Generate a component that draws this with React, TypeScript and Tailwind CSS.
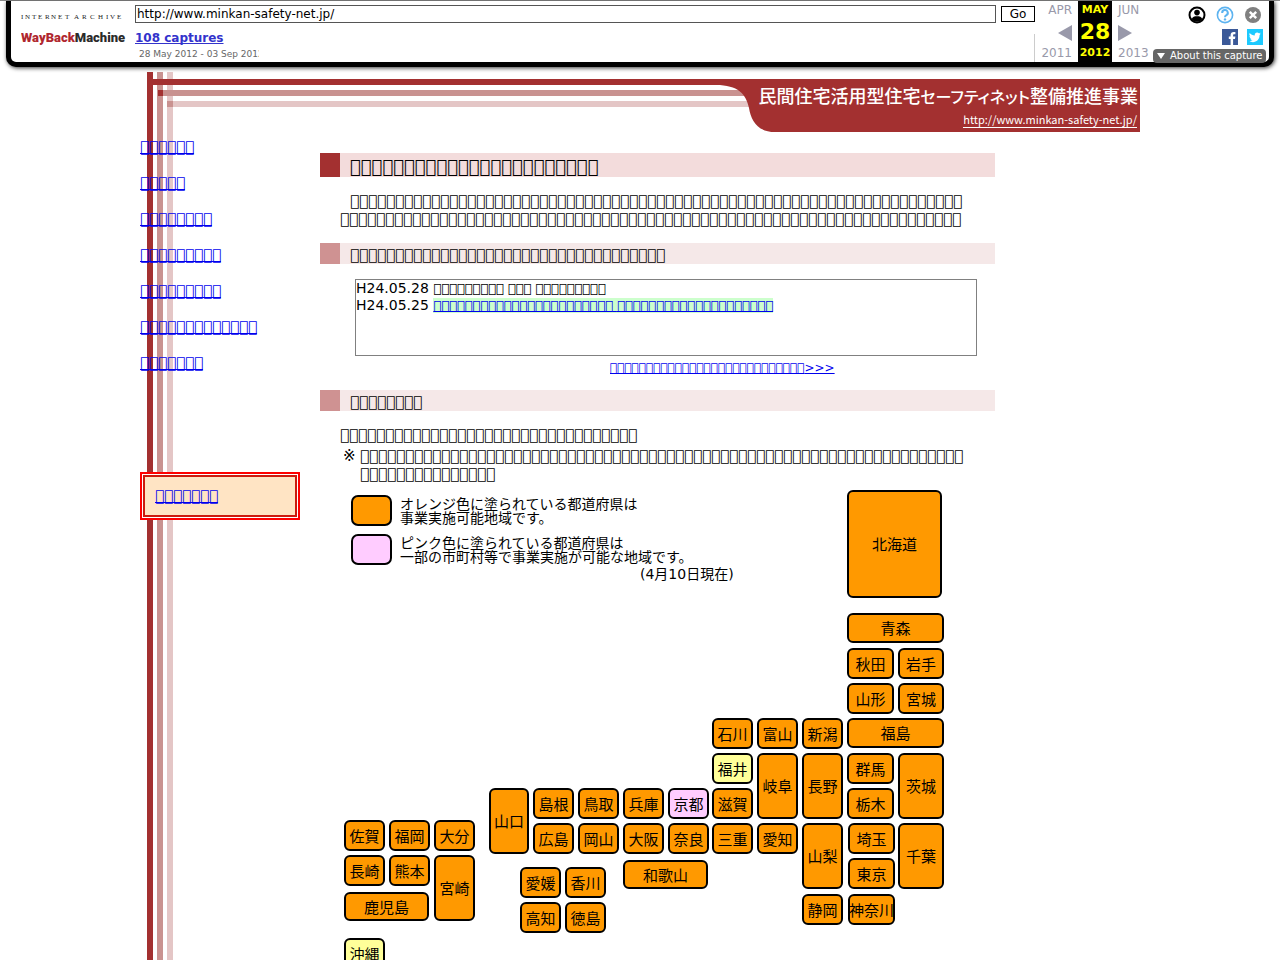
import React from "react";

interface Prefecture {
  name: string;
  x: number;
  y: number;
  w: number;
  h: number;
  color?: "yellow" | "pink";
}

const FILLS = {
  orange: "#ff9900",
  yellow: "#ffff99",
  pink: "#ffccff",
};

const prefectures: Prefecture[] = [
  { name: "北海道", x: 507, y: 3, w: 95, h: 108 },
  { name: "青森", x: 507, y: 126, w: 97, h: 30 },
  { name: "秋田", x: 507, y: 161, w: 47, h: 31 },
  { name: "岩手", x: 558, y: 161, w: 46, h: 31 },
  { name: "山形", x: 507, y: 196, w: 47, h: 31 },
  { name: "宮城", x: 558, y: 196, w: 46, h: 31 },
  { name: "石川", x: 372, y: 231, w: 41, h: 31 },
  { name: "富山", x: 417, y: 231, w: 41, h: 31 },
  { name: "新潟", x: 462, y: 231, w: 41, h: 31 },
  { name: "福島", x: 507, y: 231, w: 97, h: 30 },
  { name: "福井", x: 372, y: 266, w: 41, h: 31, color: "yellow" },
  { name: "岐阜", x: 417, y: 266, w: 41, h: 66 },
  { name: "長野", x: 462, y: 266, w: 41, h: 66 },
  { name: "群馬", x: 507, y: 266, w: 47, h: 31 },
  { name: "茨城", x: 558, y: 266, w: 46, h: 66 },
  { name: "滋賀", x: 372, y: 301, w: 41, h: 31 },
  { name: "栃木", x: 507, y: 301, w: 47, h: 31 },
  { name: "三重", x: 372, y: 336, w: 41, h: 31 },
  { name: "愛知", x: 417, y: 336, w: 41, h: 31 },
  { name: "山梨", x: 462, y: 336, w: 41, h: 66 },
  { name: "埼玉", x: 508, y: 336, w: 47, h: 31 },
  { name: "千葉", x: 558, y: 336, w: 46, h: 66 },
  { name: "東京", x: 508, y: 371, w: 47, h: 31 },
  { name: "静岡", x: 462, y: 407, w: 41, h: 31 },
  { name: "神奈川", x: 508, y: 407, w: 47, h: 31 },
  { name: "山口", x: 149, y: 301, w: 40, h: 66 },
  { name: "島根", x: 193, y: 301, w: 41, h: 31 },
  { name: "鳥取", x: 238, y: 301, w: 41, h: 31 },
  { name: "兵庫", x: 283, y: 301, w: 41, h: 31 },
  { name: "京都", x: 328, y: 301, w: 41, h: 31, color: "pink" },
  { name: "広島", x: 193, y: 336, w: 41, h: 31 },
  { name: "岡山", x: 238, y: 336, w: 41, h: 31 },
  { name: "大阪", x: 283, y: 336, w: 41, h: 31 },
  { name: "奈良", x: 328, y: 336, w: 41, h: 31 },
  { name: "和歌山", x: 283, y: 373, w: 85, h: 29 },
  { name: "愛媛", x: 180, y: 380, w: 41, h: 31 },
  { name: "香川", x: 225, y: 380, w: 41, h: 31 },
  { name: "高知", x: 180, y: 415, w: 41, h: 31 },
  { name: "徳島", x: 225, y: 415, w: 41, h: 31 },
  { name: "佐賀", x: 4, y: 333, w: 41, h: 31 },
  { name: "福岡", x: 49, y: 333, w: 41, h: 31 },
  { name: "大分", x: 94, y: 333, w: 41, h: 31 },
  { name: "長崎", x: 4, y: 368, w: 41, h: 31 },
  { name: "熊本", x: 49, y: 368, w: 41, h: 31 },
  { name: "宮崎", x: 94, y: 368, w: 41, h: 66 },
  { name: "鹿児島", x: 4, y: 405, w: 85, h: 29 },
  { name: "沖縄", x: 4, y: 451, w: 41, h: 31, color: "yellow" },
];

const menu = [6, 5, 8, 9, 9, 13, 7];

// A run of characters that the page font has no glyph for
const missing = (count: number) => "\uE100".repeat(count);

function Logo() {
  return (
    <svg viewBox="0 0 106 40" className="h-10 w-[106px]" role="img" aria-label="Internet Archive Wayback Machine">
      <text
        x="0 4 11 17 24 30 37 44 49 53 61 69 77 85 89 96"
        y="7"
        fontSize="7"
        className="font-['Liberation_Serif',serif]"
        fill="#222"
      >
        INTERNET ARCHIVE
      </text>
      <text y="30" fontSize="13" fontWeight="900" className="font-['Roboto',sans-serif]">
        <tspan x="0" fill="#b0272f">
          WayBack
        </tspan>
        <tspan fill="#2b2b2b">Machine</tspan>
      </text>
    </svg>
  );
}

function Toolbar() {
  return (
    <div className="border-t border-[#888] px-[6px]">
      <div className="flex h-[66px] rounded-b-[10px] border-x-[5px] border-b-[5px] border-black bg-white shadow-[1px_1px_4px_#333]">
        <a href="#archive" className="ml-[10px] mt-[11px] shrink-0">
          <Logo />
        </a>
        <div className="ml-2 flex min-w-0 flex-1 flex-col">
          <form className="mt-1 flex gap-[5px]" onSubmit={(e) => e.preventDefault()}>
            <input
              type="text"
              aria-label="URL"
              defaultValue="http://www.minkan-safety-net.jp/"
              className="h-[18px] min-w-0 flex-1 border border-[#555] bg-white px-px text-[12px] leading-4 text-black"
            />
            <button type="submit" className="mt-px h-4 w-[34px] border border-black bg-white text-[12px] leading-[14px]">
              Go
            </button>
          </form>
          <div className="mt-[7px] flex h-8 items-start justify-between">
            <div>
              <a href="#captures" className="block text-[12px] font-bold leading-4 text-[#3333cc] underline">
                108 captures
              </a>
              <div className="ml-1 w-[120px] overflow-hidden whitespace-nowrap text-[9px] leading-4 text-[#666]">
                28 May 2012 - 03 Sep 2012
              </div>
            </div>
            <div className="mt-1 h-7 w-px bg-[#ccc]" />
          </div>
        </div>
        <div className="flex shrink-0 text-[12px] text-[#9999aa]">
          <div className="flex w-[37px] flex-col items-end pt-px">
            <span className="h-4 leading-4">APR</span>
            <svg viewBox="0 0 14 16" className="mt-[7px] h-4 w-[14px] shrink-0">
              <path d="M14 0V16L0 8Z" fill="#9999aa" />
            </svg>
            <span className="mt-[2px] leading-5">2011</span>
          </div>
          <div className="ml-[6px] flex w-[34px] flex-col items-center bg-black pt-px font-bold text-[#ffff00]">
            <span className="h-4 text-[11px] leading-4">MAY</span>
            <span className="h-[27px] text-[22px] leading-7">28</span>
            <span className="text-[11px] leading-4">2012</span>
          </div>
          <div className="ml-[6px] flex w-[35px] flex-col items-start pt-px">
            <span className="h-4 leading-4">JUN</span>
            <svg viewBox="0 0 14 16" className="mt-[7px] h-4 w-[14px] shrink-0">
              <path d="M0 0V16L14 8Z" fill="#9999aa" />
            </svg>
            <span className="mt-[2px] leading-5">2013</span>
          </div>
        </div>
        <div className="mr-[3px] flex w-[113px] shrink-0 flex-col items-end">
          <div className="mr-1 mt-[5px] flex items-center gap-[10px]">
            <svg viewBox="0 0 18 18" className="size-[18px]">
              <circle cx="9" cy="9" r="7.5" fill="#fff" stroke="#000" strokeWidth="2" />
              <circle cx="9" cy="6.6" r="2.8" />
              <path d="M3.6 13.2C4.4 10.6 6.6 10.2 9 10.2S13.6 10.6 14.4 13.2A7 7 0 0 1 3.6 13.2Z" />
            </svg>
            <svg viewBox="0 0 18 18" className="size-[18px]">
              <circle cx="9" cy="9" r="7.6" fill="#fff" stroke="#5cb3f0" strokeWidth="1.6" />
              <path d="M6.2 7A2.8 2.8 0 1 1 10.4 9.2Q9 10 9 11.2" fill="none" stroke="#5cb3f0" strokeWidth="2" />
              <circle cx="9" cy="13.4" r="1.2" fill="#5cb3f0" />
            </svg>
            <svg viewBox="0 0 18 18" className="size-[18px]">
              <circle cx="9" cy="9" r="8" fill="#808080" />
              <path d="M5.8 5.8L12.2 12.2M12.2 5.8L5.8 12.2" stroke="#fff" strokeWidth="2.4" />
            </svg>
          </div>
          <div className="mr-[3px] mt-[5px] flex gap-[9px]">
            <svg viewBox="0 0 16 16" className="size-4">
              <rect width="16" height="16" fill="#3b5998" />
              <path d="M8.6 16V10H6.8V7.6H8.6V6C8.6 3.9 9.8 3 11.6 3H13.4V5.3H12.2C11.4 5.3 11.1 5.7 11.1 6.4V7.6H13.4L13 10H11.1V16Z" fill="#fff" />
            </svg>
            <svg viewBox="0 0 16 16" className="size-4">
              <rect width="16" height="16" fill="#1dcaff" />
              <path
                d="M13.8 4.6C13.4 4.8 12.9 4.9 12.4 5C12.9 4.7 13.3 4.2 13.5 3.6C13 3.9 12.5 4.1 11.9 4.2A2.5 2.5 0 0 0 7.7 6.4C5.7 6.3 3.9 5.4 2.7 3.9C2 5.1 2.4 6.5 3.5 7.2C3.1 7.2 2.7 7.1 2.4 6.9C2.4 8.1 3.2 9.1 4.4 9.4C4 9.5 3.6 9.5 3.3 9.4C3.6 10.4 4.5 11.1 5.6 11.1C4.6 11.9 3.3 12.3 2 12.1C7 15 12.7 11.8 12.6 6.1C13.1 5.7 13.5 5.2 13.8 4.6Z"
                fill="#fff"
              />
            </svg>
          </div>
          <button type="button" className="mt-1 flex h-[14px] w-[113px] items-center gap-[5px] rounded bg-[#666] pl-1 text-[10px] leading-[14px] text-white">
            <svg viewBox="0 0 8 6" className="h-[6px] w-2">
              <path d="M0 0H8L4 6Z" fill="#fff" />
            </svg>
            <span className="whitespace-nowrap">About this capture</span>
          </button>
        </div>
      </div>
    </div>
  );
}

function Banner() {
  return (
    <svg viewBox="0 0 1000 60" className="block w-full font-['Noto_Sans_CJK_JP',sans-serif]">
      <path d="M7 7H620V13H7Z" fill="#a33030" />
      <path d="M17 18H610V24H17Z" fill="#c99290" />
      <path d="M18 18H23V24H18Z" fill="#a33030" />
      <path d="M27 29H610V35H27Z" fill="#e4c6c6" />
      <path d="M27 29H33V35H27Z" fill="#c99290" />
      <path d="M576 7H1000V60H635C617 60 611 48 609 36C606 22 598 13 576 13Z" fill="#a33030" />
      <text x="998" y="31" textAnchor="end" fontSize="18" fontWeight="500" fill="#fff">
        民間住宅活用型住宅
        <tspan fontSize="16" className="[font-feature-settings:'palt']">
          セーフティネット
        </tspan>
        整備推進事業
      </text>
      <text x="997" y="52" textAnchor="end" fontSize="11" fill="#fff">
        http://www.minkan-safety-net.jp/
      </text>
      <path d="M823 55.5H997" stroke="#fff" />
    </svg>
  );
}

function SubHeading({ children }: { children: React.ReactNode }) {
  return (
    <h2 className="h-[21px] border-l-[20px] border-[#cf9292] bg-[#f5e8e8] pl-[10px] pt-[3px] text-[15px] leading-[18px]">
      {children}
    </h2>
  );
}

function PrefectureMap() {
  return (
    <svg viewBox="0 0 610 490" className="block w-full max-w-[610px] font-['Noto_Sans_CJK_JP',sans-serif]">
      <rect x="12" y="9" width="39" height="29" rx="6" fill={FILLS.orange} stroke="#000" strokeWidth="2" />
      <rect x="12" y="48" width="39" height="29" rx="6" fill={FILLS.pink} stroke="#000" strokeWidth="2" />
      <g fontSize="14">
        <text x="60" y="22">オレンジ色に塗られている都道府県は</text>
        <text x="60" y="36">事業実施可能地域です。</text>
        <text x="60" y="61">ピンク色に塗られている都道府県は</text>
        <text x="60" y="75">一部の市町村等で事業実施が可能な地域です。</text>
        <text x="300" y="92" className="font-['DejaVu_Sans','Noto_Sans_CJK_JP',sans-serif]">
          (4月10日現在)
        </text>
      </g>
      {prefectures.map((p) => (
        <a key={p.name} href={`#${p.name}`}>
          <rect
            x={p.x + 1}
            y={p.y + 1}
            width={p.w - 2}
            height={p.h - 2}
            rx="5"
            fill={FILLS[p.color ?? "orange"]}
            stroke="#000"
            strokeWidth="2"
          />
          <text x={p.x + p.w / 2} y={p.y + p.h / 2 + 6} textAnchor="middle" fontSize="15">
            {p.name}
          </text>
        </a>
      ))}
    </svg>
  );
}

export default function App() {
  return (
    <div className="min-h-screen bg-white font-['DejaVu_Sans',sans-serif] text-black [text-decoration-skip-ink:none]">
      <Toolbar />
      <div className="mx-auto mt-[5px] max-w-[1000px] bg-[linear-gradient(to_right,transparent_7px,#a33030_7px,#a33030_13px,transparent_13px,transparent_17px,#c99290_17px,#c99290_23px,transparent_23px,transparent_27px,#e4c6c6_27px,#e4c6c6_33px,transparent_33px)]">
        <Banner />
        <div className="flex">
          <nav className="w-[180px] shrink-0 pt-[6px] text-[15px] leading-[18px] text-[#0000ee]">
            <ul className="flex flex-col gap-[18px]">
              {menu.map((count, i) => (
                <li key={i}>
                  <a href={`#menu${i + 1}`} className="underline">
                    {missing(count)}
                  </a>
                </li>
              ))}
            </ul>
            <div className="mt-[100px] w-40 border-2 border-[#ff0000] bg-white p-px">
              <div className="border-2 border-[#cc1a0e] bg-[#ffe4c4] p-[10px]">
                <a href="#contact" className="underline">
                  {missing(7)}
                </a>
              </div>
            </div>
          </nav>
          <main className="min-w-0 max-w-[675px] flex-1 pt-[21px] text-[15px] leading-[18px]">
            <h1 className="h-6 border-l-[20px] border-[#a33030] bg-[#f3dcdc] pl-[10px] pt-[3px] text-[18px] leading-[21px]">
              {missing(23)}
            </h1>
            <p className="ml-5 mt-[15px] whitespace-nowrap indent-[10px]">{missing(68)}</p>
            <p className="ml-5 whitespace-nowrap">{missing(69)}</p>

            <div className="mt-[15px]">
              <SubHeading>{missing(35)}</SubHeading>
            </div>
            <div className="ml-[35px] mr-[18px] mt-[15px] h-[77px] overflow-auto border border-[#808080] text-[14px] leading-4">
              <p>
                H24.05.28{" "}
                <span className="text-[13px]">
                  {missing(9)} {missing(3)} {missing(9)}
                </span>
              </p>
              <p>
                H24.05.25{" "}
                <a href="#news" className="bg-[#ccffcc] text-[13px] text-[#0000ee] underline">
                  {missing(23)} {missing(20)}
                </a>
              </p>
            </div>
            <p className="ml-[290px] mt-1 text-[12px] leading-4">
              <a href="#more" className="text-[#0000ee] underline">
                {missing(27)}&gt;&gt;&gt;
              </a>
            </p>

            <div className="mt-[14px]">
              <SubHeading>{missing(8)}</SubHeading>
            </div>
            <p className="ml-5 mt-[15px]">{missing(33)}</p>
            <div className="ml-5 mt-[3px] flex whitespace-nowrap">
              <span className="w-5 pl-[3px]">※</span>
              <p>
                {missing(67)}
                <br />
                {missing(15)}
              </p>
            </div>
            <div className="ml-5 mt-[4px]">
              <PrefectureMap />
            </div>
          </main>
        </div>
      </div>
    </div>
  );
}
